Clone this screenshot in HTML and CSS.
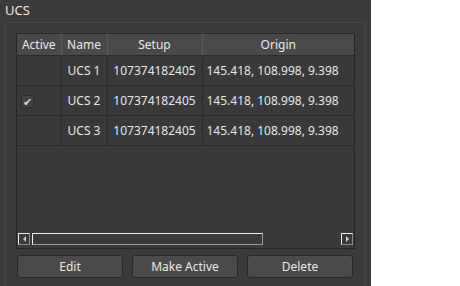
FILE: index.html
```html
<!DOCTYPE html>
<html>

<head>
    <title>UCS</title>
    <meta charset="UTF-8">
    <link rel="stylesheet" href="styles.css">
</head>

<body>
    <div class="painel">
        <div class="titulo">UCS</div>
        <div class="grupo">
            <div class="tabela_caixa">
                <table class="tabela">
                    <tr class="cabecalho">
                        <td class="col_ativo">Active</td>
                        <td class="col_nome">Name</td>
                        <td class="col_setup">Setup</td>
                        <td class="col_origem">Origin</td>
                    </tr>
                    <tr>
                        <td></td>
                        <td>UCS 1</td>
                        <td>107374182405</td>
                        <td class="esq">145.418, 108.998, 9.398</td>
                    </tr>
                    <tr>
                        <td class="ativo"><span class="marca">&#10004;</span></td>
                        <td>UCS 2</td>
                        <td>107374182405</td>
                        <td class="esq">145.418, 108.998, 9.398</td>
                    </tr>
                    <tr>
                        <td></td>
                        <td>UCS 3</td>
                        <td>107374182405</td>
                        <td class="esq">145.418, 108.998, 9.398</td>
                    </tr>
                </table>
                <div class="vazio"></div>
                <div class="rolagem">
                    <div class="seta"><span class="tri_esq"></span></div>
                    <div class="barra"></div>
                    <div class="trilho"></div>
                    <div class="seta"><span class="tri_dir"></span></div>
                </div>
            </div>
            <div class="botoes">
                <button class="botao">Edit</button>
                <button class="botao">Make Active</button>
                <button class="botao">Delete</button>
            </div>
        </div>
    </div>
</body>

</html>
```

FILE: styles.css
```css
* {
    margin: 0;
    padding: 0;
    box-sizing: border-box;
}

body {
    background: #ffffff;
    font-family: "Noto Sans", "Open Sans", sans-serif;
    font-size: 12px;
    color: #e6e6e6;
}

.painel {
    width: 371px;
    height: 286px;
    background: #3b3b3b;
    padding: 2px 5px 0 5px;
    overflow: hidden;
}

.titulo {
    font-size: 13px;
    height: 20px;
    line-height: 16px;
}

.grupo {
    border: 1px solid #474747;
    border-bottom: none;
    border-radius: 2px 2px 0 0;
    height: 270px;
    padding: 10px 10px 0 10px;
    width: 361px;
}

.tabela_caixa {
    border: 1px solid #262626;
    border-top-color: #2a2a2a;
    width: 339px;
    height: 216px;
    background: #393939;
    display: flex;
    flex-direction: column;
}

.tabela {
    border-collapse: collapse;
    width: 337px;
    table-layout: fixed;
}

.tabela td {
    border: 1px solid #2c2c2c;
    height: 30px;
    text-align: center;
    white-space: nowrap;
    overflow: hidden;
    padding: 0;
}

.tabela tr:first-child td {
    border-top: none;
}

.tabela td:first-child {
    border-left: none;
}

.tabela td:last-child {
    border-right: none;
}

.cabecalho td {
    height: 21px;
    background: #494949;
    border-color: #2c2c2c #5a5a5a #2c2c2c #5a5a5a;
    color: #e8e8e8;
}

.col_ativo {
    width: 44px;
}

.col_nome {
    width: 46px;
}

.col_setup {
    width: 95px;
}

.tabela .esq {
    text-align: left;
    padding-left: 4px;
}

.tabela .ativo {
    text-align: left;
    padding-left: 4px;
}

.marca {
    display: inline-block;
    width: 13px;
    height: 13px;
    border: 1px solid #2e2e2e;
    background: #424242;
    color: #d4d4d4;
    font-size: 11px;
    line-height: 12px;
    text-align: center;
    vertical-align: middle;
}

.vazio {
    flex: 1;
}

.rolagem {
    display: flex;
    align-items: center;
    height: 14px;
    padding: 0 1px;
    margin-bottom: 2px;
    gap: 2px;
}

.seta {
    width: 12px;
    height: 12px;
    border: 1px solid #f0f0f0;
    border-right-color: #8a8a8a;
    border-bottom-color: #8a8a8a;
    display: flex;
    align-items: center;
    justify-content: center;
}

.tri_esq {
    width: 0;
    height: 0;
    border-top: 3px solid transparent;
    border-bottom: 3px solid transparent;
    border-right: 3px solid #d0d0d0;
}

.tri_dir {
    width: 0;
    height: 0;
    border-top: 3px solid transparent;
    border-bottom: 3px solid transparent;
    border-left: 3px solid #d0d0d0;
}

.barra {
    width: 231px;
    height: 12px;
    border: 1px solid #f0f0f0;
    border-right-color: #9a9a9a;
    border-bottom-color: #9a9a9a;
}

.trilho {
    flex: 1;
}

.botoes {
    display: flex;
    gap: 9px;
    margin-top: 6px;
    padding-left: 1px;
}

.botao {
    width: 106px;
    height: 23px;
    background: #4a4a4a;
    border: 1px solid #2a2a2a;
    border-radius: 3px;
    color: #e8e8e8;
    font-family: "Noto Sans", "Open Sans", sans-serif;
    font-size: 12px;
}
```
